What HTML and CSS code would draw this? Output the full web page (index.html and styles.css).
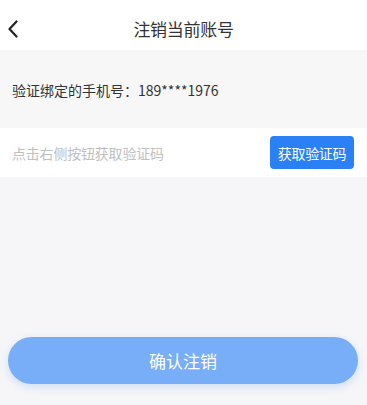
FILE: index.html
```html
<!DOCTYPE html>
<html lang="zh">
<head>
<meta charset="utf-8">
<link rel="stylesheet" href="styles.css">
</head>
<body>
<div class="page">
  <header class="nav">
    <span class="back">
      <svg width="12" height="18" viewBox="0 0 12 18"><path d="M9.5 1.5 L2.5 9 L9.5 16.5" fill="none" stroke="#222" stroke-width="2.2" stroke-linecap="round" stroke-linejoin="round"/></svg>
    </span>
    <h1 class="title">注销当前账号</h1>
  </header>
  <div class="phone">验证绑定的手机号：189****1976</div>
  <div class="code-row">
    <span class="placeholder">点击右侧按钮获取验证码</span>
    <button class="get-code">获取验证码</button>
  </div>
  <div class="spacer"></div>
  <div class="footer">
    <button class="confirm">确认注销</button>
  </div>
</div>
</body>
</html>
```
FILE: styles.css
```css
* { box-sizing: border-box; margin: 0; padding: 0; }
html, body { height: 100%; }
body {
  background: #f6f6f8;
  font-family: "Noto Sans CJK SC", "Noto Sans", sans-serif;
  color: #333;
}
.page { display: flex; flex-direction: column; height: 405px; }
.nav {
  height: 50px;
  background: #fff;
  display: flex;
  align-items: center;
  justify-content: center;
  position: relative;
  padding-top: 6px;
}
.back {
  position: absolute;
  left: 7px;
  top: 20px;
  display: flex;
}
.title { font-size: 17px; font-weight: 400; color: #333; letter-spacing: -0.3px; }
.phone {
  height: 78px;
  display: flex;
  align-items: center;
  padding-left: 12px;
  font-size: 14px;
  color: #333;
  background: #f7f7f7;
  padding-top: 1px;
}
.code-row {
  height: 49px;
  background: #fff;
  display: flex;
  align-items: center;
  justify-content: space-between;
  padding: 0 13px 0 12px;
}
.placeholder { font-size: 14px; color: #c0c0c0; letter-spacing: -0.2px; }
.get-code {
  width: 84px;
  height: 33px;
  border: none;
  border-radius: 4px;
  background: #2a80f5;
  color: #fff;
  font-family: inherit;
  font-size: 14px;
  letter-spacing: -0.3px;
}
.spacer { flex: 1; }
.footer { padding: 0 9px 21px 8px; }
.confirm {
  width: 100%;
  height: 47px;
  border: none;
  border-radius: 24px;
  background: #78aef8;
  color: #fff;
  font-family: inherit;
  font-size: 17px;
  box-shadow: 0 3px 8px rgba(90, 150, 240, 0.25);
}
```
